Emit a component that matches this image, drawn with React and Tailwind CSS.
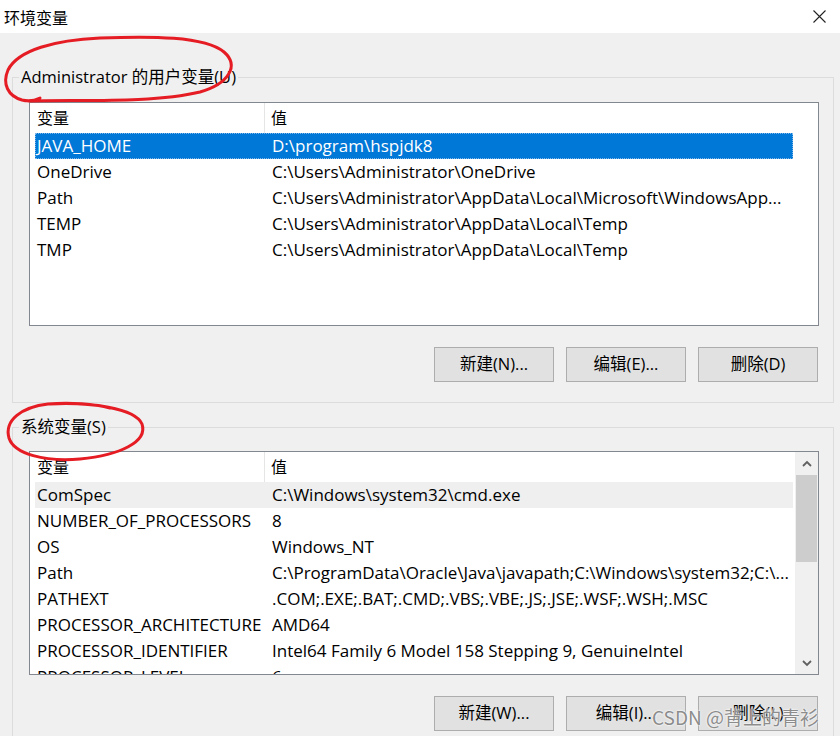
import React from 'react';

const userVars = [
    ['JAVA_HOME', 'D:\\program\\hspjdk8'],
    ['OneDrive', 'C:\\Users\\Administrator\\OneDrive'],
    ['Path', 'C:\\Users\\Administrator\\AppData\\Local\\Microsoft\\WindowsApp...'],
    ['TEMP', 'C:\\Users\\Administrator\\AppData\\Local\\Temp'],
    ['TMP', 'C:\\Users\\Administrator\\AppData\\Local\\Temp'],
];

const sysVars = [
    ['ComSpec', 'C:\\Windows\\system32\\cmd.exe'],
    ['NUMBER_OF_PROCESSORS', '8'],
    ['OS', 'Windows_NT'],
    ['Path', 'C:\\ProgramData\\Oracle\\Java\\javapath;C:\\Windows\\system32;C:\\...'],
    ['PATHEXT', '.COM;.EXE;.BAT;.CMD;.VBS;.VBE;.JS;.JSE;.WSF;.WSH;.MSC'],
    ['PROCESSOR_ARCHITECTURE', 'AMD64'],
    ['PROCESSOR_IDENTIFIER', 'Intel64 Family 6 Model 158 Stepping 9, GenuineIntel'],
    ['PROCESSOR_LEVEL', '6'],
];

const Chevron = ({ up }) => (
    <svg width="10" height="7" viewBox="0 0 10 7">
        <path d={up ? 'M1 6 L5 2 L9 6' : 'M1 1 L5 5 L9 1'} fill="none" stroke="#606060" strokeWidth="1.8" />
    </svg>
);

const Row = ({ name, value, selected, hover }) => (
    <div
        className={`flex h-[26px] items-center ml-[5px] w-[758px] ${
            selected ? 'bg-[#0078d7] text-white outline outline-1 outline-dotted outline-[#7fb8e8] -outline-offset-1' : hover ? 'bg-[#efefef]' : ''
        }`}
    >
        <div className="w-[235px] pl-[2px] whitespace-nowrap overflow-hidden">{name}</div>
        <div className="flex-1 pl-[2px] whitespace-nowrap overflow-hidden">{value}</div>
    </div>
);

const VarList = ({ rows, scroll, selectedIndex, hoverIndex }) => (
    <div className="h-[224px] border border-[#828790] bg-white flex overflow-hidden text-[17px]">
        <div className="flex-1 overflow-hidden">
            <div className="flex h-[30px] items-center text-[16px]">
                <div className="w-[235px] pl-[7px] border-r border-[#e5e5e5] h-full flex items-center">变量</div>
                <div className="pl-[6px]">值</div>
            </div>
            {rows.map(([n, v], i) => (
                <Row key={n + i} name={n} value={v} selected={i === selectedIndex} hover={i === hoverIndex} />
            ))}
        </div>
        {scroll && (
            <div className="w-[23px] bg-[#f0f0f0] flex flex-col">
                <div className="h-[22px] flex items-center justify-center"><Chevron up /></div>
                <div className="mt-[1px] h-[87px] mx-[1px] bg-[#cdcdcd]"></div>
                <div className="flex-1"></div>
                <div className="h-[22px] flex items-center justify-center"><Chevron /></div>
            </div>
        )}
    </div>
);

const Btn = ({ children }) => (
    <button className="w-[120px] h-[35px] bg-[#e1e1e1] border border-[#adadad] text-[16.5px] text-black">{children}</button>
);

const Group = ({ title, className, children }) => (
    <fieldset className={`ml-[12px] w-[822px] border border-[#dcdcdc] pl-[16px] pr-[14px] pb-[20px] ${className}`}>
        <legend className="-ml-[10px] px-[2px] leading-[20px] text-[16.5px]">{title}</legend>
        {children}
    </fieldset>
);

export default function App() {
    return (
        <div className="relative w-[840px] h-[736px] overflow-hidden bg-[#f0f0f0] text-black text-[16px] font-['Segoe_UI','Open_Sans','Noto_Sans_CJK_SC',sans-serif]">
            <div className="h-[33px] bg-white flex items-center justify-between pl-[4px] pr-[14px]">
                <span className="font-['Noto_Sans_CJK_SC',sans-serif]">环境变量</span>
                <svg width="13" height="13" viewBox="0 0 13 13">
                    <path d="M0.5 0.5 L12.5 12.5 M12.5 0.5 L0.5 12.5" stroke="#222" strokeWidth="1.1" />
                </svg>
            </div>

            <Group title="Administrator 的用户变量(U)" className="mt-[34px]">
                <div className="mt-[15px]">
                    <VarList rows={userVars} selectedIndex={0} />
                </div>
                <div className="mt-[21px] flex justify-end gap-[12px] pr-[1px]">
                    <Btn>新建(N)...</Btn>
                    <Btn>编辑(E)...</Btn>
                    <Btn>删除(D)</Btn>
                </div>
            </Group>

            <Group title="系统变量(S)" className="mt-[14px]">
                <div className="mt-[14px]">
                    <VarList rows={sysVars} scroll hoverIndex={0} />
                </div>
                <div className="mt-[21px] flex justify-end gap-[12px] pr-[1px]">
                    <Btn>新建(W)...</Btn>
                    <Btn>编辑(I)...</Btn>
                    <Btn>删除(L)</Btn>
                </div>
            </Group>

            <svg className="absolute left-0 top-0 pointer-events-none" width="840" height="736" viewBox="0 0 840 736">
                <path
                    d="M28 101 C70 99 150 104 200 92 C228 84 240 66 224 52 C205 36 150 36 100 38 C55 40 18 50 8 70 C2 84 8 96 22 100 C30 102 36 100 40 98"
                    fill="none" stroke="#e51c23" strokeWidth="3" strokeLinecap="round"
                />
                <path
                    d="M50 404 C90 402 135 408 142 424 C148 442 120 455 80 459 C45 462 14 454 9 438 C4 420 22 407 48 404 C70 402 95 404 110 408"
                    fill="none" stroke="#e51c23" strokeWidth="3" strokeLinecap="round"
                />
            </svg>

            <div className="absolute left-[652px] top-[703px] text-[19px] text-[#8c8c8c] font-['Noto_Sans_CJK_SC',sans-serif] [text-shadow:0_0_2px_#fff,0_0_2px_#fff] whitespace-nowrap">
                CSDN @背上的青衫
            </div>
        </div>
    );
}
